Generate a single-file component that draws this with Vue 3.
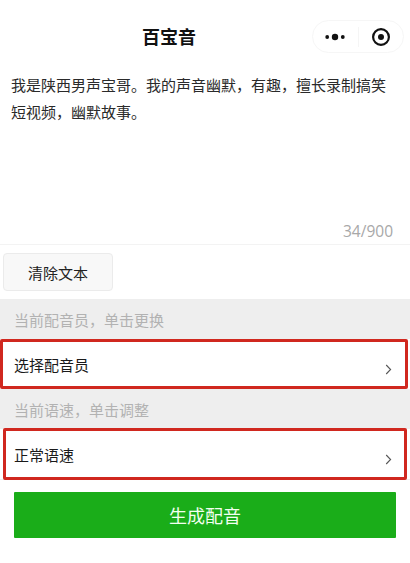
<script setup>
const rows = [
  { label: '当前配音员，单击更换', value: '选择配音员', mark: 'mark-a' },
  { label: '当前语速，单击调整', value: '正常语速', mark: 'mark-b' },
]
</script>

<template>
  <div class="page">
    <header class="nav">
      <h1 class="title">百宝音</h1>
      <div class="capsule">
        <svg class="dots" viewBox="0 0 20 8" width="20" height="8" aria-hidden="true">
          <circle cx="2.2" cy="4" r="1.9" />
          <circle cx="10" cy="4" r="3.2" />
          <circle cx="17.8" cy="4" r="1.9" />
        </svg>
        <span class="sep"></span>
        <svg class="target" viewBox="0 0 20 20" width="20" height="20" aria-hidden="true">
          <circle cx="10" cy="10" r="7.9" fill="none" stroke="#111" stroke-width="2.2" />
          <circle cx="10" cy="10" r="3" fill="#111" />
        </svg>
      </div>
    </header>

    <section class="editor">
      <p class="copy">我是陕西男声宝哥。我的声音幽默，有趣，擅长录制搞笑短视频，幽默故事。</p>
      <div class="count">34/900</div>
    </section>

    <div class="tools">
      <button class="clear" type="button">清除文本</button>
    </div>

    <section class="settings">
      <template v-for="row in rows" :key="row.value">
        <div class="label">{{ row.label }}</div>
        <div class="row">
          <span>{{ row.value }}</span>
          <svg class="chev" viewBox="0 0 7 11" width="7" height="11" aria-hidden="true">
            <path d="M1.2 1l4.4 4.5-4.4 4.5" fill="none" stroke="#555" stroke-width="1.1" />
          </svg>
          <i class="mark" :class="row.mark"></i>
        </div>
      </template>
    </section>

    <div class="action">
      <button class="generate" type="button">生成配音</button>
    </div>
  </div>
</template>

<style scoped>
.page {
  width: 410px;
  height: 563px;
  overflow: hidden;
  background: #fff;
  color: #2a2a2a;
  font-family: "Noto Sans CJK SC", "Noto Sans", sans-serif;
}
.nav {
  height: 64px;
  box-sizing: border-box;
  padding: 20px 6px 0 312px;
  position: relative;
}
.title {
  position: absolute;
  left: 0;
  top: 24px;
  width: 338px;
  margin: 0;
  text-align: center;
  font-size: 18px;
  line-height: 24px;
  font-weight: 700;
  color: #111;
}
.capsule {
  height: 33px;
  box-sizing: border-box;
  border: 1px solid #f6f6f6;
  border-radius: 17px;
  display: flex;
  align-items: center;
  padding-left: 12px;
}
.sep {
  width: 1px;
  height: 20px;
  margin: 0 12px 0 13px;
  background: #f5f5f5;
}
.dots { fill: #111; }
.editor {
  height: 181px;
  box-sizing: border-box;
  padding: 7px 17px 0 11px;
  border-bottom: 1px solid #f3f3f3;
  display: flex;
  flex-direction: column;
}
.copy {
  margin: 0;
  font-size: 15px;
  line-height: 27px;
  flex: 1;
}
.count {
  font-family: "Open Sans", sans-serif;
  font-size: 15.5px;
  line-height: 22px;
  color: #a8a8a8;
  text-align: right;
  margin-bottom: 2px;
}
.tools {
  height: 54px;
  box-sizing: border-box;
  padding: 8px 0 0 3px;
}
.clear {
  width: 110px;
  height: 38px;
  padding: 0;
  border: 1px solid #ebebeb;
  border-radius: 4px;
  background: #f8f8f8;
  color: #222;
  font: inherit;
  font-size: 15px;
}
.settings {
  background: #eeeeee;
  height: 181px;
}
.label {
  height: 40px;
  box-sizing: border-box;
  padding: 9px 0 0 14px;
  font-size: 15px;
  line-height: 24px;
  color: #b2b2b2;
}
.row {
  position: relative;
  height: 50px;
  box-sizing: border-box;
  padding: 0 18px 0 14px;
  display: flex;
  align-items: center;
  justify-content: space-between;
  background: #fff;
  font-size: 15px;
  color: #1a1a1a;
}
.chev { margin-top: 10px; }
.mark {
  position: absolute;
  top: 0;
  bottom: 0;
  border: 3px solid #d0281f;
  border-radius: 2px;
  box-sizing: border-box;
}
.mark-a { left: 0; right: 2px; }
.mark-b { left: 3px; right: 3px; top: -1px; bottom: -1px; }
.action {
  padding: 12px 14px 0;
}
.generate {
  display: block;
  width: 100%;
  height: 46px;
  padding: 0;
  border: 0;
  border-radius: 1px;
  background: #1aad19;
  color: #f2fff0;
  font: inherit;
  font-size: 18px;
}
</style>
